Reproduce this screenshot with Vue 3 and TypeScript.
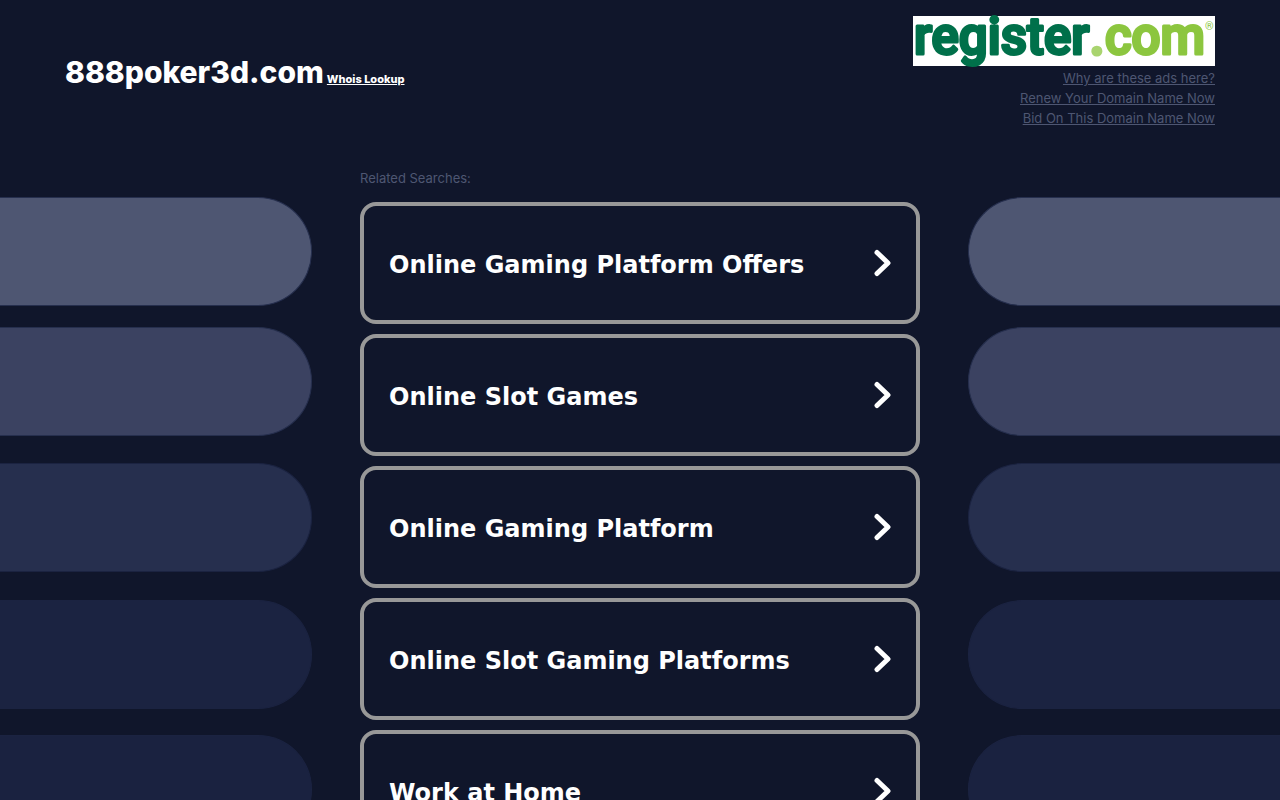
<script setup lang="ts">
interface Search {
  label: string
  href: string
}

const searches: Search[] = [
  { label: 'Online Gaming Platform Offers', href: '#offers' },
  { label: 'Online Slot Games', href: '#slot-games' },
  { label: 'Online Gaming Platform', href: '#platform' },
  { label: 'Online Slot Gaming Platforms', href: '#slot-platforms' },
  { label: 'Work at Home', href: '#work-at-home' },
]

const notices: string[] = [
  'Why are these ads here?',
  'Renew Your Domain Name Now',
  'Bid On This Domain Name Now',
]
</script>

<template>
  <div class="page">
    <header class="header">
      <div class="domain">
        <h1>888poker3d.com</h1>
        <a class="whois" href="#whois">Whois Lookup</a>
      </div>
      <div class="registrar">
        <a class="logo" href="#register" aria-label="register.com">
          <svg viewBox="0 0 302 50" width="302" height="50" role="img" aria-label="register.com">
            <rect width="302" height="50" fill="#fff" />
            <text class="brand" x="1" y="38" fill="#00704a" stroke="#00704a">register</text>
            <text class="brand dot" x="177" y="38" fill="#a9d46f" stroke="#a9d46f">.</text>
            <text class="brand" x="192" y="38" fill="#8cc63f" stroke="#8cc63f">com</text>
            <text class="mark" x="292" y="14" fill="#8cc63f">®</text>
          </svg>
        </a>
        <a v-for="notice in notices" :key="notice" class="notice" href="#notice">{{ notice }}</a>
      </div>
    </header>

    <main class="body">
      <div class="pills left" aria-hidden="true">
        <span class="pill p1"></span>
        <span class="pill p2"></span>
        <span class="pill p3"></span>
        <span class="pill p4"></span>
        <span class="pill p5"></span>
      </div>

      <section class="searches">
        <h2>Related Searches:</h2>
        <ul>
          <li v-for="search in searches" :key="search.label">
            <a class="card" :href="search.href">
              <span class="label">{{ search.label }}</span>
              <svg viewBox="0 0 18 28" width="18" height="28" aria-hidden="true">
                <path d="M3 3.5 L14 14 L3 24.5" />
              </svg>
            </a>
          </li>
        </ul>
      </section>

      <div class="pills right" aria-hidden="true">
        <span class="pill p1"></span>
        <span class="pill p2"></span>
        <span class="pill p3"></span>
        <span class="pill p4"></span>
        <span class="pill p5"></span>
      </div>
    </main>
  </div>
</template>

<style>
body {
  margin: 0;
  background: #10162b;
}
</style>

<style scoped>
.page {
  min-height: 100vh;
  background: #10162b;
  color: #fff;
  font-family: Inter, 'Open Sans', sans-serif;
}

.header {
  display: flex;
  justify-content: space-between;
  padding: 16px 65px 0;
}

.domain {
  display: flex;
  align-items: baseline;
  gap: 3px;
  padding-top: 38px;
}

h1 {
  margin: 0;
  font-size: 30px;
  line-height: 36px;
  font-weight: 800;
}

.whois {
  color: #fff;
  font-size: 11px;
  font-weight: 800;
}

.registrar {
  display: flex;
  flex-direction: column;
  align-items: flex-end;
}

.logo {
  height: 52px;
}

.logo svg {
  display: block;
  overflow: visible;
}

.brand {
  font-family: Roboto, sans-serif;
  font-size: 51px;
  font-weight: 500;
  stroke-width: 3px;
  stroke-linejoin: round;
}

.dot {
  stroke-width: 4px;
}

.mark {
  font-family: Roboto, sans-serif;
  font-size: 11px;
}

.notice {
  color: #4e5672;
  font-size: 13px;
  line-height: 20px;
}

.body {
  display: grid;
  grid-template-columns: 1fr 560px 1fr;
  column-gap: 48px;
  padding-top: 40px;
}

.searches h2 {
  margin: 0 0 14px;
  color: #4e5672;
  font-size: 13px;
  line-height: 20px;
  font-weight: 400;
}

ul {
  display: grid;
  gap: 10px;
  margin: 0;
  padding: 0;
  list-style: none;
}

.card {
  display: flex;
  align-items: center;
  justify-content: space-between;
  box-sizing: border-box;
  height: 122px;
  padding: 0 24px 0 25px;
  border: 4px solid #989898;
  border-radius: 16px;
  color: #fff;
  font-family: 'DejaVu Sans', sans-serif;
  font-size: 24px;
  line-height: 36px;
  font-weight: 700;
  text-decoration: none;
}

.label {
  padding-top: 3px;
}

.card path {
  fill: none;
  stroke: #fff;
  stroke-width: 5px;
  stroke-linecap: round;
  stroke-linejoin: round;
}

.pills {
  display: flex;
  flex-direction: column;
  padding-top: 29px;
}

.pill {
  box-sizing: border-box;
  height: 109px;
  border: 1px solid #262f4e;
}

.left .pill {
  border-left: 0;
  border-radius: 0 54px 54px 0;
}

.right .pill {
  border-right: 0;
  border-radius: 54px 0 0 54px;
}

.p1 {
  margin-bottom: 21px;
  background: #4e5672;
}

.p2 {
  margin-bottom: 27px;
  background: #3b4261;
}

.p3 {
  margin-bottom: 28px;
  background: #262f4e;
}

.pill.p3,
.pill.p4,
.pill.p5 {
  border-color: #1b2341;
}

.p4 {
  margin-bottom: 26px;
  background: #1b2341;
}

.p5 {
  background: #1a2240;
}
</style>
